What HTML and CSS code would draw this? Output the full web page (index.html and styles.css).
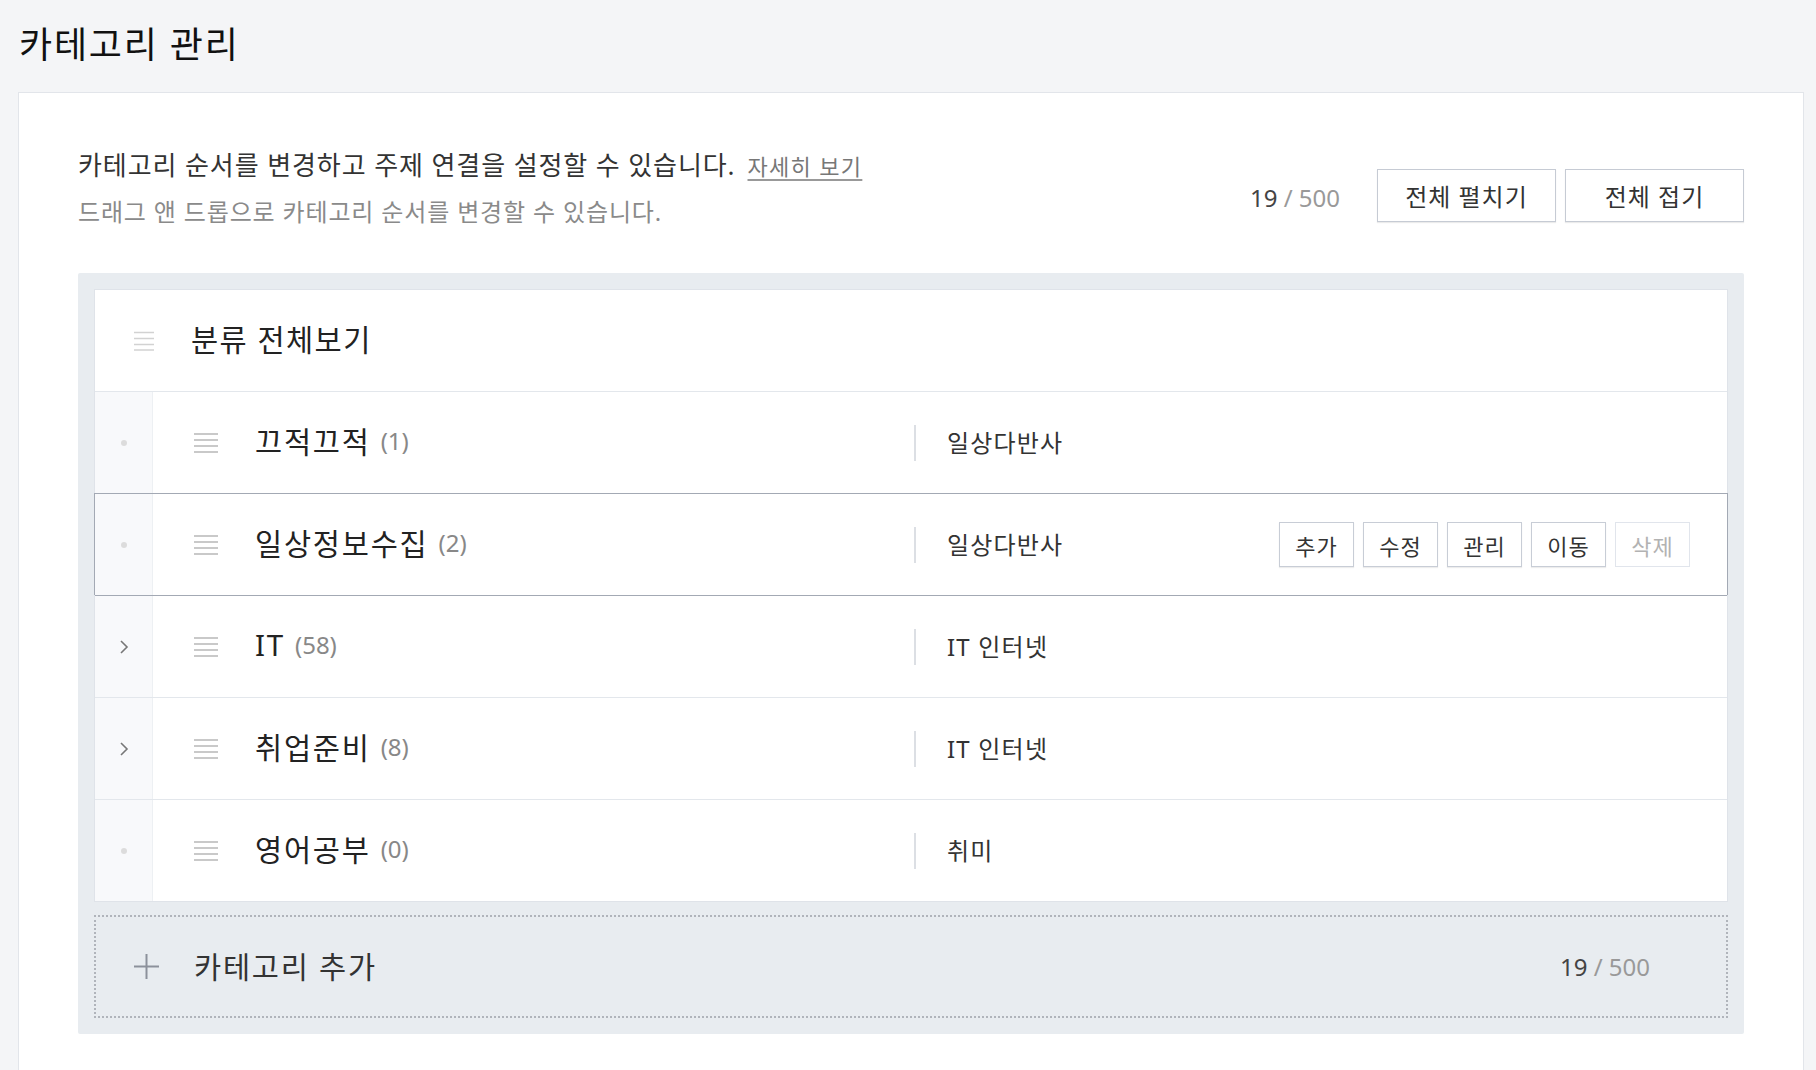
FILE: index.html
```html
<!DOCTYPE html>
<html lang="ko">
<head>
    <meta charset="UTF-8">
    <meta name="viewport" content="width=device-width, initial-scale=1.0">
    <title>카테고리 관리</title>
    <link rel="stylesheet" href="styles.css">
</head>
<body>
    <div class="page">
        <h1 class="page-title">카테고리 관리</h1>

        <div class="card">
            <!-- 안내 문구 + 상단 버튼 -->
            <div class="card-head">
                <div class="guide">
                    <p class="guide-main">카테고리 순서를 변경하고 주제 연결을 설정할 수 있습니다.<a href="#" class="guide-link">자세히 보기</a></p>
                    <p class="guide-sub">드래그 앤 드롭으로 카테고리 순서를 변경할 수 있습니다.</p>
                </div>
                <div class="head-tools">
                    <span class="counter"><em>19</em> / 500</span>
                    <button type="button" class="btn">전체 펼치기</button>
                    <button type="button" class="btn">전체 접기</button>
                </div>
            </div>

            <!-- 카테고리 트리 -->
            <div class="tree-wrap">
                <ul class="tree">
                    <li class="tree-row tree-root">
                        <svg class="handle handle-root" width="20" height="20" viewBox="0 0 20 20"><path d="M0 1.5h20M0 7.5h20M0 13.5h20M0 19h20"/></svg>
                        <span class="name">분류 전체보기</span>
                    </li>
                    <li class="tree-row">
                        <span class="tree-toggle"><i class="dot"></i></span>
                        <div class="tree-main">
                            <svg class="handle" width="24" height="20" viewBox="0 0 24 20"><path d="M0 1h24M0 7h24M0 13h24M0 19h24"/></svg>
                            <span class="name">끄적끄적</span><span class="count">(1)</span>
                        </div>
                        <div class="tree-topic"><span class="topic-name">일상다반사</span></div>
                    </li>
                    <li class="tree-row active">
                        <span class="tree-toggle"><i class="dot"></i></span>
                        <div class="tree-main">
                            <svg class="handle" width="24" height="20" viewBox="0 0 24 20"><path d="M0 1h24M0 7h24M0 13h24M0 19h24"/></svg>
                            <span class="name">일상정보수집</span><span class="count">(2)</span>
                        </div>
                        <div class="tree-topic">
                            <span class="topic-name">일상다반사</span>
                            <div class="row-actions">
                                <button type="button" class="btn-sm">추가</button>
                                <button type="button" class="btn-sm">수정</button>
                                <button type="button" class="btn-sm">관리</button>
                                <button type="button" class="btn-sm">이동</button>
                                <button type="button" class="btn-sm" disabled>삭제</button>
                            </div>
                        </div>
                    </li>
                    <li class="tree-row">
                        <span class="tree-toggle">
                            <svg class="chevron" width="10" height="16" viewBox="0 0 10 16"><path d="M2 2l6 6-6 6"/></svg>
                        </span>
                        <div class="tree-main">
                            <svg class="handle" width="24" height="20" viewBox="0 0 24 20"><path d="M0 1h24M0 7h24M0 13h24M0 19h24"/></svg>
                            <span class="name">IT</span><span class="count">(58)</span>
                        </div>
                        <div class="tree-topic"><span class="topic-name">IT 인터넷</span></div>
                    </li>
                    <li class="tree-row">
                        <span class="tree-toggle">
                            <svg class="chevron" width="10" height="16" viewBox="0 0 10 16"><path d="M2 2l6 6-6 6"/></svg>
                        </span>
                        <div class="tree-main">
                            <svg class="handle" width="24" height="20" viewBox="0 0 24 20"><path d="M0 1h24M0 7h24M0 13h24M0 19h24"/></svg>
                            <span class="name">취업준비</span><span class="count">(8)</span>
                        </div>
                        <div class="tree-topic"><span class="topic-name">IT 인터넷</span></div>
                    </li>
                    <li class="tree-row">
                        <span class="tree-toggle"><i class="dot"></i></span>
                        <div class="tree-main">
                            <svg class="handle" width="24" height="20" viewBox="0 0 24 20"><path d="M0 1h24M0 7h24M0 13h24M0 19h24"/></svg>
                            <span class="name">영어공부</span><span class="count">(0)</span>
                        </div>
                        <div class="tree-topic"><span class="topic-name">취미</span></div>
                    </li>
                </ul>

                <div class="tree-add">
                    <svg class="plus" width="25" height="25" viewBox="0 0 25 25"><path d="M12.5 0v25M0 12.5h25"/></svg>
                    <span class="add-label">카테고리 추가</span>
                    <span class="counter add-counter"><em>19</em> / 500</span>
                </div>
            </div>
        </div>
    </div>
</body>
</html>
```

FILE: styles.css
```css
* {
    box-sizing: border-box;
}
body {
    margin: 0;
    background: #f4f5f7;
    font-family: "Noto Sans", "Noto Sans CJK KR", sans-serif;
    color: #333;
    overflow: hidden;
}
p {
    margin: 0;
}
.page-title {
    margin: 0;
    padding: 27px 0 0 19px;
    font-size: 36px;
    line-height: 36px;
    font-weight: 400;
    letter-spacing: 0.05em;
    color: #111;
}
.card {
    margin: 29px 12px 0 18px;
    padding: 55px 59px 60px;
    background: #fff;
    border: 1px solid #e2e5ea;
    border-bottom: 0;
}
.card-head {
    display: flex;
    justify-content: space-between;
    align-items: flex-start;
}
.guide-main {
    font-size: 26px;
    line-height: 34px;
    letter-spacing: 0.035em;
    color: #333;
}
.guide-link {
    margin-left: 12px;
    font-size: 22px;
    letter-spacing: 0.06em;
    color: #777;
    text-decoration: underline;
    text-underline-offset: 4px;
    text-decoration-color: #999;
}
.guide-sub {
    margin-top: 12px;
    font-size: 24px;
    line-height: 34px;
    letter-spacing: 0.035em;
    color: #8a8a8a;
}
.head-tools {
    display: flex;
    align-items: center;
    gap: 9px;
    margin-top: 21px;
}
.counter {
    font-size: 24px;
    color: #999;
}
.counter em {
    font-style: normal;
    color: #444;
}
.head-tools .counter {
    margin: 4px 28px 0 0;
}
.btn {
    width: 179px;
    height: 53px;
    background: #fff;
    border: 1px solid #c6cbd4;
    box-shadow: 0 1px 1px rgba(0, 0, 0, 0.08);
    font-family: inherit;
    font-size: 24px;
    letter-spacing: 0.04em;
    color: #333;
    cursor: pointer;
}

/* 트리 영역 */
.tree-wrap {
    margin-top: 44px;
    padding: 16px;
    background: #e8ecf0;
    border-radius: 2px;
}
.tree {
    list-style: none;
    margin: 0;
    padding: 0;
    background: #fff;
    border: 1px solid #dfe3e9;
}
.tree-row {
    display: flex;
    height: 102px;
    border-top: 1px solid #e3e7ec;
}
.tree-row:first-child {
    border-top: 0;
    height: 101px;
}
.tree-row.active {
    margin: 0 -1px;
    border: 1px solid #a3a9b4;
    border-bottom: 0;
}
.tree-row.active + .tree-row {
    border-top-color: #a3a9b4;
}
.tree-root {
    align-items: center;
    padding-left: 39px;
}
.tree-root .name {
    margin-left: 37px;
    letter-spacing: 0.05em;
}
.handle {
    flex-shrink: 0;
    fill: none;
    stroke: #b8b8b8;
    stroke-width: 1.6;
}
.handle-root {
    stroke: #d2d2d2;
}
.name {
    font-size: 29.5px;
    letter-spacing: 0.06em;
    color: #222;
    margin-bottom: 4px;
}
.count {
    margin-left: 10px;
    font-size: 24px;
    color: #888;
    margin-bottom: 4px;
}
.tree-toggle {
    flex: 0 0 58px;
    display: flex;
    align-items: center;
    justify-content: center;
    background: #f8f9fb;
    border-right: 1px solid #edf0f3;
}
.dot {
    width: 6px;
    height: 6px;
    border-radius: 50%;
    background: #dcdcdc;
}
.chevron {
    fill: none;
    stroke: #777;
    stroke-width: 1.6;
}
.tree-main {
    flex: 0 0 761px;
    display: flex;
    align-items: center;
    padding-left: 41px;
}
.tree-main .name {
    margin-left: 37px;
}
.tree-topic {
    flex: 1;
    display: flex;
    align-items: center;
    padding-right: 37px;
}
.topic-name {
    padding-left: 31px;
    border-left: 2px solid #dcdfe4;
    font-size: 24px;
    line-height: 36px;
    letter-spacing: 0.05em;
    color: #333;
}
.row-actions {
    display: flex;
    gap: 9px;
    margin-left: auto;
}
.btn-sm {
    width: 75px;
    height: 45px;
    padding: 0;
    background: #fff;
    border: 1px solid #c8cdd6;
    box-shadow: 0 1px 1px rgba(0, 0, 0, 0.07);
    font-family: inherit;
    font-size: 22px;
    letter-spacing: 0.05em;
    color: #333;
    cursor: pointer;
}
.btn-sm:disabled {
    border-color: #e1e5ec;
    box-shadow: none;
    color: #b2b2b2;
    cursor: default;
}

/* 카테고리 추가 */
.tree-add {
    display: flex;
    align-items: center;
    height: 103px;
    margin-top: 13px;
    padding: 0 76px 0 38px;
    border: 2px dotted #b0b4bb;
}
.plus {
    fill: none;
    stroke: #8c919b;
    stroke-width: 2;
}
.add-label {
    margin-left: 35px;
    font-size: 29.5px;
    letter-spacing: 0.06em;
    color: #333;
    margin-bottom: 3px;
}
.add-counter {
    margin-left: auto;
}
```
